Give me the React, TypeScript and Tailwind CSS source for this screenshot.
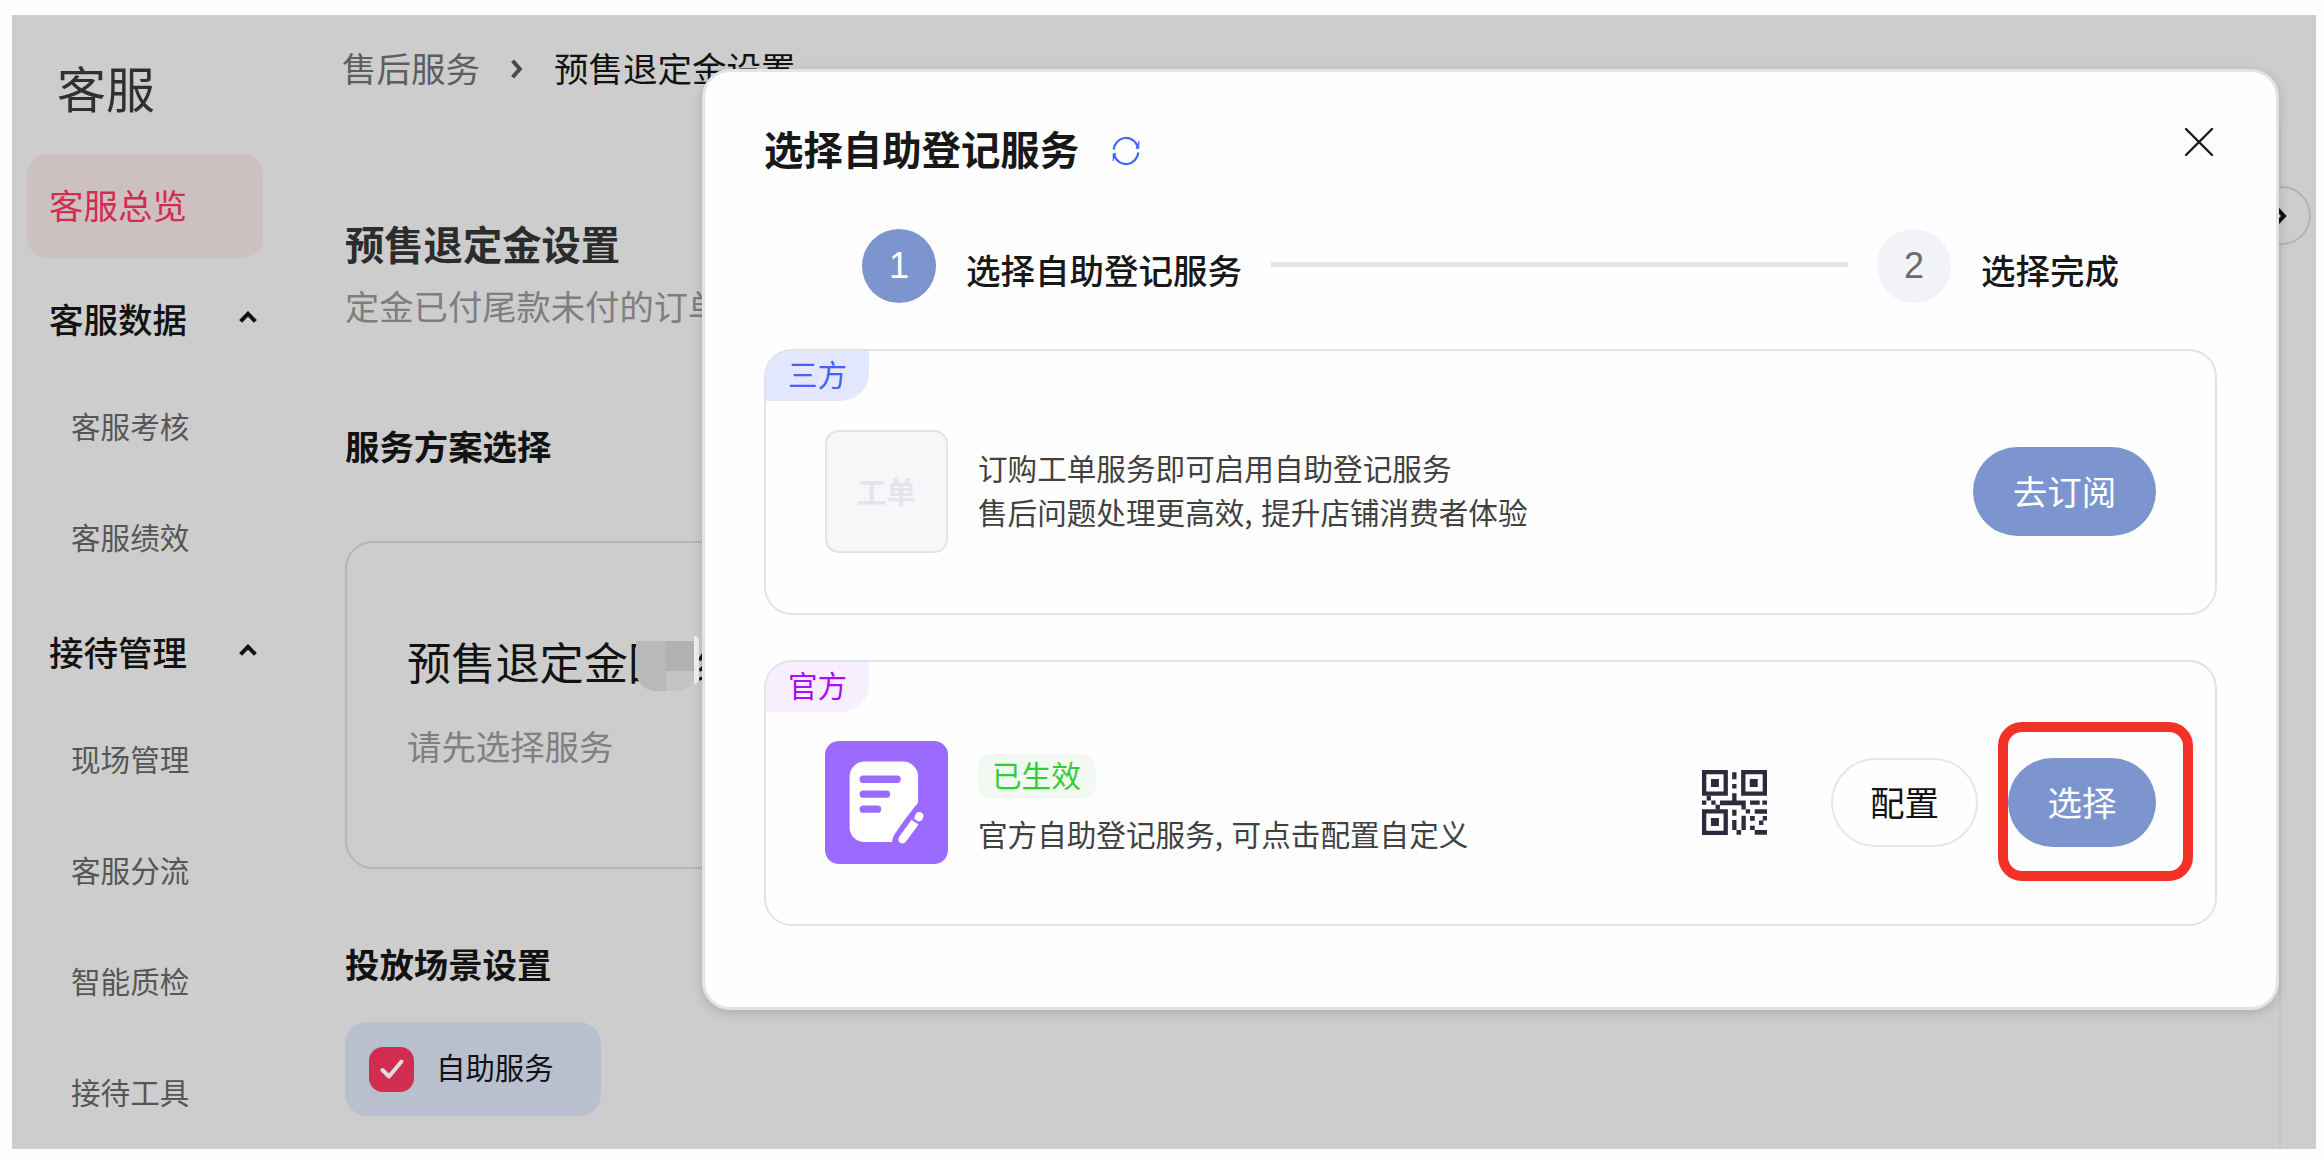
import { clsx } from "clsx";
import type { ReactNode } from "react";

type NavItem = { label: string; group?: boolean };

const navItems: NavItem[] = [
  { label: "客服数据", group: true },
  { label: "客服考核" },
  { label: "客服绩效" },
  { label: "接待管理", group: true },
  { label: "现场管理" },
  { label: "客服分流" },
  { label: "智能质检" },
  { label: "接待工具" },
];

function Sidebar() {
  return (
    <aside className="w-[333px] shrink-0 pl-[15px]">
      <h1 className="mt-[42px] pl-[30px] text-[49px] leading-[60px] text-[#303030]">
        客服
      </h1>
      <div className="mt-[37px] flex h-[104px] w-[236px] items-center rounded-[20px] bg-[#ccc0c1] pb-[3px] pl-[22px] text-[34.5px] text-[#d42c50]">
        客服总览
      </div>
      <nav className="mt-[5px]">
        {navItems.map((item) => (
          <div
            key={item.label}
            className={clsx(
              "flex h-[111px] items-center",
              item.group
                ? "pt-px pl-[22px] text-[34.5px] font-medium text-[#121212]"
                : "pb-[7px] pl-[44px] text-[29.6px] text-[#565656]",
            )}
          >
            {item.label}
            {item.group && (
              <svg
                viewBox="0 0 18 12"
                className="-mt-[4px] ml-[52px] h-3 w-[18px]"
                fill="none"
                stroke="#121212"
                strokeWidth="4"
              >
                <path d="M1.6 10.4 9 2.8l7.4 7.6" />
              </svg>
            )}
          </div>
        ))}
      </nav>
    </aside>
  );
}

function SettingsPage() {
  return (
    <main className="w-[1935px] shrink-0">
      <div className="mt-7 flex h-12 items-center text-[34.5px] leading-[48px]">
        <span className="-ml-[3px] text-[#5e5e5e]">售后服务</span>
        <svg
          viewBox="0 0 12 20"
          className="mt-1 ml-[31px] h-5 w-3"
          fill="none"
          stroke="#4a4a4a"
          strokeWidth="4"
        >
          <path d="M1.6 1.8 8.8 10l-7.2 8.2" />
        </svg>
        <span className="ml-[31px] text-[#121212]">预售退定金设置</span>
      </div>

      <h2 className="mt-[124px] text-[39.3px] leading-[56px] font-bold text-[#2c2c2c]">
        预售退定金设置
      </h2>
      <p className="mt-[10px] text-[34.3px] leading-[48px] text-[#7e7e7e]">
        定金已付尾款未付的订单
      </p>

      <h3 className="mt-[92px] text-[34.4px] leading-[48px] font-bold text-[#121212]">
        服务方案选择
      </h3>
      <div className="mt-[72px] h-[328px] w-[1700px] rounded-[28px] border-2 border-[#b4b5bc] pt-[86px] pl-[60px]">
        <div className="relative text-[44.2px] leading-[64px] text-[#121212]">
          预售退定金回<span className="ml-6">线</span>
          {/* redacted part of the plan name */}
          <div className="absolute top-[12px] left-[229px] grid h-[50px] w-[60px] grid-cols-2 overflow-hidden rounded-b-[20px] bg-[#b9b9b9]">
            <div />
            <div>
              <div className="h-[30px] bg-[#b1b1b1]" />
              <div className="h-5 bg-[#c3c3c3]" />
            </div>
          </div>
          <div className="absolute top-[7px] left-[287px] h-[48px] w-[5px] rounded-r-full bg-[#f1f1f1]" />
        </div>
        <p className="mt-[28px] text-[34.4px] leading-[48px] text-[#808080]">
          请先选择服务
        </p>
      </div>

      <h3 className="mt-[70px] text-[34.4px] leading-[48px] font-bold text-[#121212]">
        投放场景设置
      </h3>
      <label className="mt-[35px] flex h-[94px] w-[256px] items-center rounded-[22px] bg-[#b8bfcf] pl-6">
        <span className="flex size-[45px] items-center justify-center rounded-[14px] bg-[#d02d50]">
          <svg
            viewBox="0 0 24 20"
            className="h-5 w-6"
            fill="none"
            stroke="#dedede"
            strokeWidth="4"
            strokeLinecap="round"
            strokeLinejoin="round"
          >
            <path d="m2.5 11 6.5 6.500L21.500 2.500" />
          </svg>
        </span>
        <span className="ml-[22px] pb-[5px] text-[29.4px] text-[#121212]">
          自助服务
        </span>
      </label>
    </main>
  );
}

function ServiceCard({
  tag,
  tagClassName,
  icon,
  children,
  actions,
  className,
}: {
  tag: string;
  tagClassName: string;
  icon: ReactNode;
  children: ReactNode;
  actions: ReactNode;
  className: string;
}) {
  return (
    <section
      className={clsx(
        "relative h-[266px] w-[1453px] rounded-[28px] border-2 border-[#e0e3ea]",
        className,
      )}
    >
      <span
        className={clsx(
          "absolute top-0 left-0 h-[50px] w-[103px] rounded-tl-[26px] rounded-br-[28px] pl-[22px] text-[29.500px] leading-[45px]",
          tagClassName,
        )}
      >
        {tag}
      </span>
      <div className="mt-[79px] flex h-[123px] items-center pr-[59px] pl-[59px]">
        {icon}
        <div className="ml-[30px] text-[29.600px] leading-[44px] text-[#414141]">
          {children}
        </div>
        <div className="ml-auto flex items-center">{actions}</div>
      </div>
    </section>
  );
}

function FormIcon() {
  return (
    <svg viewBox="0 0 370 370" className="size-[123px] shrink-0">
      <rect width="370" height="370" rx="42" fill="#9b6bff" />
      <path
        d="M118 62h118a44 44 0 0 1 44 44v80c-20 24-42 52-62 82-10 14-16 24-16 36h-84a44 44 0 0 1-44-44V106a44 44 0 0 1 44-44Z"
        fill="#fff"
      />
      <g stroke="#9b6bff" strokeWidth="22" strokeLinecap="round">
        <path d="M115 115h102M115 160h70M115 205h43" />
      </g>
      <g stroke="#fff" strokeWidth="25">
        <path d="m233 296 37-51" strokeLinecap="round" />
        <path d="m282 229 2-3" strokeLinecap="round" />
      </g>
      <path d="m256 230 32 21" stroke="#9b6bff" strokeWidth="7" />
    </svg>
  );
}

function QrIcon() {
  return (
    <svg viewBox="0 0 196 196" className="size-[65px]" fill="#2c2b3d">
      <g fill="none" stroke="#2c2b3d" strokeWidth="13">
        <path d="M6.500 6.500h65v65h-65zM124.500 6.500h65v65h-65zM6.500 124.500h65v65h-65z" />
      </g>
      <path d="M27 27h24v24H27zM144 27h24v24h-24zM27 145h24v24H27z" />
      <path d="M91 7h13v21H91zM91 42h13v14H91zM91 70h13v22h28v27h-13v-13H54V92h37z" />
      <path d="M0 92h13v13H0zM14 78h13v14H14zM28 92h13v13H28zM41 105h13v14H41z" />
      <path d="M145 92h29v13h-29zM182 92h14v13h-14zM132 118h13v13h-13zM159 118h37v14h-37z" />
      <path d="M91 120h13v18H91zM91 151h13v30H91zM119 138h13v43h-13zM104 181h14v14h-14z" />
      <path d="M145 139h14v14h-14zM183 139h13v13h-13zM172 152h13v14h-13zM145 168h14v13h-14zM159 181h37v14h-37z" />
    </svg>
  );
}

function RefreshIcon() {
  return (
    <svg
      viewBox="0 0 28 30"
      className="h-[30px] w-7"
      fill="none"
      stroke="#4463ff"
      strokeWidth="2.200"
    >
      <path d="M1.600 13.500A12.600 13.500 0 0 1 25.800 10.500M26.400 16.500A12.600 13.500 0 0 1 2.200 19.500" />
      <path
        d="M27 5v7.500h-3zM1 25v-7.500h3z"
        fill="#4463ff"
        strokeWidth=".6"
      />
    </svg>
  );
}

function StepDot({ value, active }: { value: number; active?: boolean }) {
  return (
    <span
      className={clsx(
        "flex size-[74px] shrink-0 items-center justify-center rounded-full font-['Liberation_Sans'] text-[36px]",
        active ? "bg-[#7c95cf] text-white" : "bg-[#f1f3f9] text-[#6b6b6b]",
      )}
    >
      {value}
    </span>
  );
}

function SelectServiceDialog() {
  return (
    <div
      role="dialog"
      className="absolute top-[54px] left-[690px] h-[941px] w-[1577px] rounded-[28px] border-3 border-[#e2e2e8] bg-[#fefefe] pl-[59px] shadow-[0_3px_12px_rgba(0,0,0,0.16)]"
    >
      <header className="mt-12 flex h-14 items-center">
        <h2 className="text-[39.4px] leading-[56px] font-bold text-[#181818]">
          选择自助登记服务
        </h2>
        <button className="mt-[5px] ml-[33px]">
          <RefreshIcon />
        </button>
        <button className="-mt-3 mr-[62px] ml-auto">
          <svg
            viewBox="0 0 30 30"
            className="size-[30px]"
            fill="none"
            stroke="#181818"
            strokeWidth="2.400"
            strokeLinecap="round"
          >
            <path d="m2 2 26 26M28 2 2 28" />
          </svg>
        </button>
      </header>

      <div className="mt-[53px] ml-[98px] flex h-[74px] items-center text-[34.5px] leading-[48px] font-medium text-[#181818]">
        <StepDot value={1} active />
        <span className="mt-[6px] ml-[30px] w-[275px] shrink-0 whitespace-nowrap">
          选择自助登记服务
        </span>
        <span className="-mt-[4px] ml-[30px] h-[5px] w-[577px] bg-[#e4e4eb]" />
        <span className="ml-[29px]">
          <StepDot value={2} />
        </span>
        <span className="mt-[6px] ml-[30px]">选择完成</span>
      </div>

      <ServiceCard
        className="mt-[46px]"
        tag="三方"
        tagClassName="bg-[#e4e8fe] text-[#4460ff]"
        icon={
          <span className="flex size-[123px] items-center justify-center rounded-[14px] border-2 border-[#e2e3ea] bg-[#f6f7f9] pb-[3px] text-[29.500px] font-bold text-[#e4e5ec]">
            工单
          </span>
        }
        actions={
          <button className="h-[89px] w-[183px] rounded-full bg-[#7c95cf] pb-[2px] text-[34.5px] text-white">
            去订阅
          </button>
        }
      >
        <p>订购工单服务即可启用自助登记服务</p>
        <p className="mb-[4px] [word-spacing:2px]">
          售后问题处理更高效, 提升店铺消费者体验
        </p>
      </ServiceCard>

      <ServiceCard
        className="mt-[45px]"
        tag="官方"
        tagClassName="bg-[#f8effe] text-[#ad0cf8]"
        icon={<FormIcon />}
        actions={
          <>
            <QrIcon />
            <button className="ml-16 h-[89px] w-[147px] rounded-full border-2 border-[#e6e6ec] pb-[2px] text-[34.5px] text-[#121212]">
              配置
            </button>
            <div className="relative ml-[30px]">
              <button className="h-[89px] w-[148px] rounded-full bg-[#7c95cf] pb-[2px] text-[34.5px] text-white">
                选择
              </button>
              <div className="absolute -top-[36px] -left-[10px] h-[159px] w-[195px] rounded-[24px] border-10 border-[#f43126]" />
            </div>
          </>
        }
      >
        <span className="mt-[5px] block h-[45px] w-[118px] rounded-[14px] bg-[#f2f9f2] pl-[14px] leading-[41px] text-[#35cb35]">
          已生效
        </span>
        <p className="mt-[13px] [word-spacing:2px]">
          官方自助登记服务, 可点击配置自定义
        </p>
      </ServiceCard>
    </div>
  );
}

export default function App() {
  return (
    <div className="h-[1158px] bg-[#fdfdfd] px-[12px] pt-[15px] font-['Noto_Sans_CJK_SC',sans-serif]">
      <div className="relative flex h-[1134px] w-[2304px] overflow-hidden bg-[#cdcdcd]">
        <Sidebar />
        <SettingsPage />
        <div className="mt-[110px] -ml-px flex-1 border-l-2 border-[#c5c5c6]" />
        {/* collapse handle sits on the edge of the right rail */}
        <div className="absolute top-[171px] left-[2240px] flex size-[59px] items-center justify-end rounded-full border-2 border-[#b2b2b2] bg-[#cdcdcd] pr-[22px]">
          <svg
            viewBox="0 0 12 20"
            className="h-[18px] w-3"
            fill="none"
            stroke="#121212"
            strokeWidth="4.500"
          >
            <path d="M1.600 1.800 9.200 10l-7.600 8.200" />
          </svg>
        </div>
        <SelectServiceDialog />
      </div>
    </div>
  );
}
